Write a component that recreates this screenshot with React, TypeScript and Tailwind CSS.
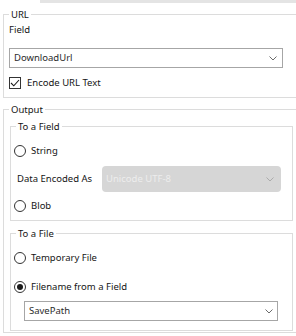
import type { ReactNode } from "react";

function Chevron({ color = "#6b6b6b" }: { color?: string }) {
  return (
    <svg width="8" height="5" viewBox="0 0 8 5" className="shrink-0">
      <path d="M0.5 0.5 L4 4 L7.5 0.5" fill="none" stroke={color} strokeWidth="1" />
    </svg>
  );
}

function Radio({ checked = false, label }: { checked?: boolean; label: string }) {
  return (
    <label className="flex h-[14px] items-center gap-[5px]">
      <span className="flex h-[12px] w-[12px] items-center justify-center rounded-full border border-[#333333]">
        {checked && <span className="h-[6px] w-[6px] rounded-full bg-[#1a1a1a]" />}
      </span>
      <span>{label}</span>
    </label>
  );
}

function Group({ title, className, children }: { title: string; className?: string; children: ReactNode }) {
  return (
    <fieldset className={`border border-[#dcdcdc] ${className ?? ""}`}>
      <legend className="ml-[5px] px-[2px] pt-[1px] leading-[14px]">{title}</legend>
      {children}
    </fieldset>
  );
}

export default function App() {
  return (
    <div className="h-[336px] w-[296px] overflow-hidden bg-white font-['Noto_Sans',sans-serif] text-[9.5px] text-[#151515]">
      <div className="ml-[40px] h-[3px] bg-[#e4e4e4]" />

      {/* URL */}
      <Group title="URL" className="ml-[3px] mt-[4px] w-[300px]">
        <div className="pb-[7px] pl-[5px] pt-[1px]">
          <p className="leading-[14px]">Field</p>
          <div className="mt-[11px] flex h-[20px] w-[274px] items-center justify-between border border-[#a6a6a6] pl-[4px] pr-[5px] text-[#2b2b2b]">
            <span>DownloadUrl</span>
            <Chevron />
          </div>
          <label className="mt-[8px] flex h-[14px] items-center gap-[6px]">
            <span className="flex h-[12px] w-[12px] items-center justify-center border border-[#333333]">
              <svg width="10" height="8" viewBox="0 0 10 8">
                <path d="M1 4 L3.8 6.8 L9 1" fill="none" stroke="#1a1a1a" strokeWidth="1.1" />
              </svg>
            </span>
            <span>Encode URL Text</span>
          </label>
        </div>
      </Group>

      {/* Output */}
      <Group title="Output" className="ml-[3px] mt-[4px] w-[300px]">
        <div className="pb-[1px] pl-[6px] pt-[2px]">
          <Group title="To a Field" className="w-[283px]">
            <div className="pb-[7px] pl-[3px]">
              <div className="mt-[10px]">
                <Radio label="String" />
              </div>
              <div className="mt-[8px] flex h-[26px] items-center">
                <span className="ml-[3px] w-[85px]">Data Encoded As</span>
                <div className="flex h-[26px] w-[179px] items-center justify-between rounded-[4px] bg-[#d6d6d6] pl-[4px] pr-[7px] text-[#ededed]">
                  <span>Unicode UTF-8</span>
                  <Chevron color="#ababab" />
                </div>
              </div>
              <div className="mt-[7px]">
                <Radio label="Blob" />
              </div>
            </div>
          </Group>

          <Group title="To a File" className="mt-[5px] w-[283px]">
            <div className="pb-[9px] pl-[3px]">
              <div className="mt-[10px]">
                <Radio label="Temporary File" />
              </div>
              <div className="mt-[15px]">
                <Radio checked label="Filename from a Field" />
              </div>
              <div className="ml-[10px] mt-[7px] flex h-[20px] w-[254px] items-center justify-between border border-[#a6a6a6] pl-[4px] pr-[4px] text-[#2b2b2b]">
                <span>SavePath</span>
                <Chevron />
              </div>
            </div>
          </Group>
        </div>
      </Group>
    </div>
  );
}
